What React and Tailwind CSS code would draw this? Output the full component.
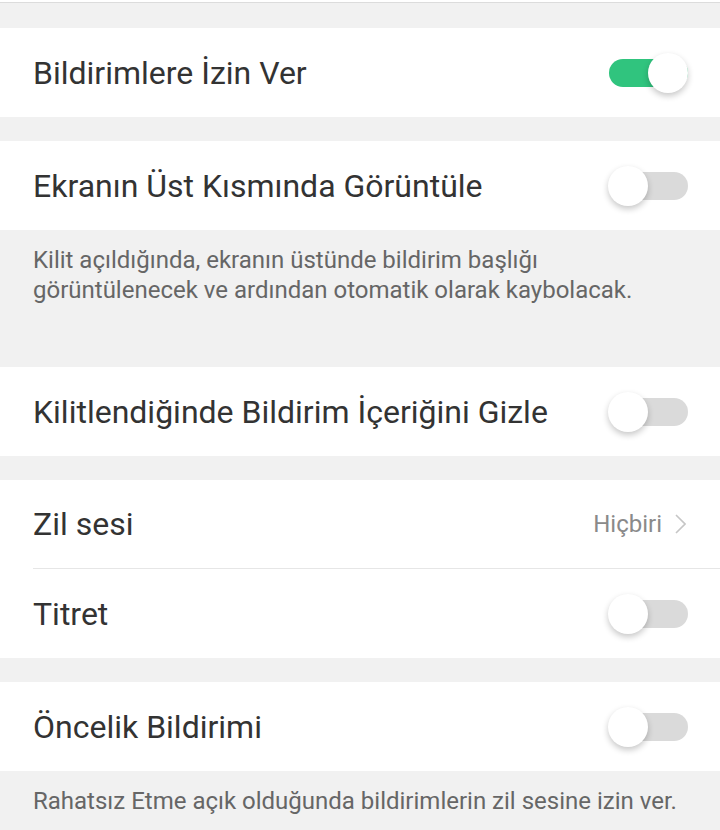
import React from "react";

const font = { fontFamily: "Roboto, 'Noto Sans', sans-serif" };

function Toggle({ on }) {
  return (
    <div className="relative w-[80px] h-[40px] shrink-0">
      <div
        className={`absolute left-[1px] right-0 top-[6px] h-[28px] rounded-full ${
          on ? "bg-[#30c47e]" : "bg-[#dadada]"
        }`}
      />
      <div
        className={`absolute top-0 w-[40px] h-[40px] rounded-full bg-white shadow-[0_3px_6px_rgba(0,0,0,0.22)] ${
          on ? "right-0" : "left-0"
        }`}
      />
    </div>
  );
}

function Row({ label, children, divider }) {
  return (
    <div className="bg-white pl-[33px]">
      <div
        className={`flex items-center justify-between pr-[32px] h-[89px] ${
          divider ? "border-b border-[#e6e6e6]" : ""
        }`}
      >
        <span className="text-[32px] text-[#333333] leading-none">{label}</span>
        {children}
      </div>
    </div>
  );
}

function Gap() {
  return <div className="h-[24px] bg-[#f1f1f1]" />;
}

function Note({ children, className = "" }) {
  return (
    <div className={`bg-[#f1f1f1] px-[33px] pt-[15px] text-[24px] leading-[30px] text-[#666666] ${className}`}>
      {children}
    </div>
  );
}

export default function App() {
  return (
    <div className="w-[720px] h-[830px] overflow-hidden bg-[#f1f1f1]" style={font}>
      <div className="h-[2px] bg-white" />
      <div className="h-[1px] bg-[#dcdcdc]" />
      <div className="h-[25px] bg-[#f1f1f1]" />

      <Row label="Bildirimlere İzin Ver">
        <Toggle on />
      </Row>
      <Gap />
      <Row label="Ekranın Üst Kısmında Görüntüle">
        <Toggle />
      </Row>
      <Note className="h-[137px]">
        Kilit açıldığında, ekranın üstünde bildirim başlığı
        <br />
        görüntülenecek ve ardından otomatik olarak kaybolacak.
      </Note>

      <Row label="Kilitlendiğinde Bildirim İçeriğini Gizle">
        <Toggle />
      </Row>
      <Gap />
      <Row label="Zil sesi" divider>
        <div className="flex items-center gap-[13px] pr-[2px]">
          <span className="text-[24px] text-[#8a8a8a]">Hiçbiri</span>
          <svg width="11" height="20" viewBox="0 0 11 20" fill="none">
            <path d="M1 1 L10 10 L1 19" stroke="#c6c6c6" strokeWidth="1.6" />
          </svg>
        </div>
      </Row>
      <Row label="Titret">
        <Toggle />
      </Row>
      <Gap />
      <Row label="Öncelik Bildirimi">
        <Toggle />
      </Row>
      <Note>Rahatsız Etme açık olduğunda bildirimlerin zil sesine izin ver.</Note>
    </div>
  );
}
